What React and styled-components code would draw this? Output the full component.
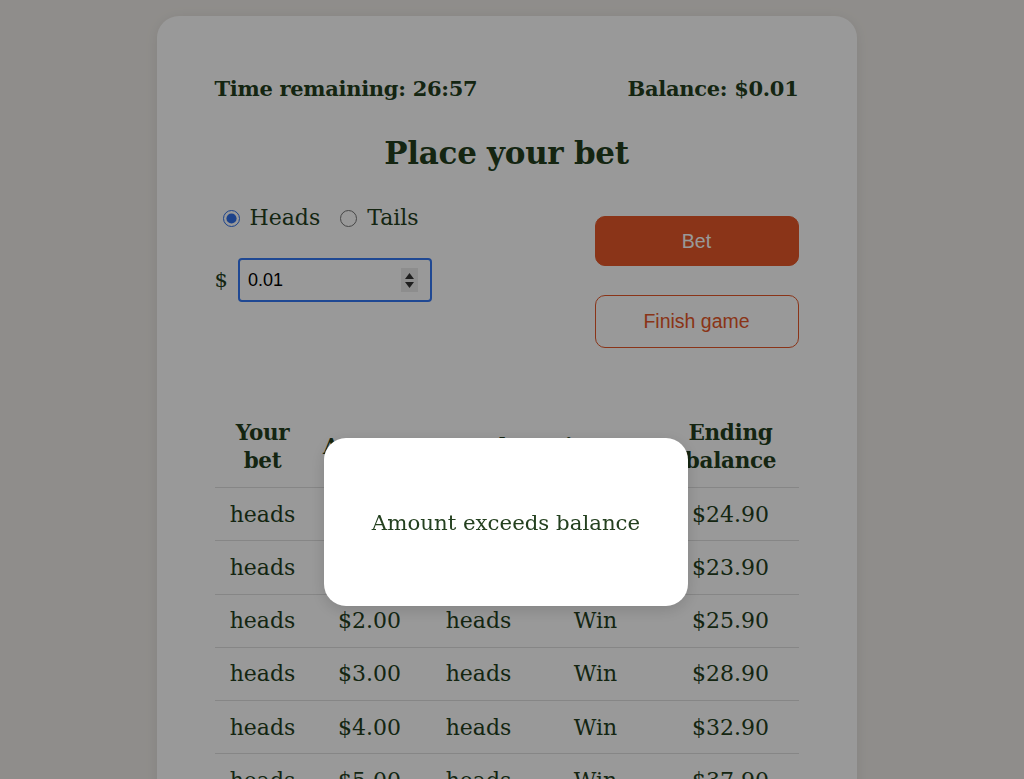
import React from "react";
import styled, { createGlobalStyle } from "styled-components";

const Global = createGlobalStyle`
  html, body { margin: 0; padding: 0; height: 100%; overflow: hidden; }
  body { background: #efece8; font-family: "DejaVu Serif", "Liberation Serif", serif; color: #233f1d; }
  * { box-sizing: border-box; }
`;

const Page = styled.div`
  display: flex;
  justify-content: center;
  padding: 16px 11px 0 0;
`;

const Card = styled.main`
  width: 700px;
  background: #ffffff;
  border-radius: 22px;
  box-shadow: 0 2px 14px rgba(0, 0, 0, 0.08);
  padding: 59px 58px 40px;
`;

const TopBar = styled.div`
  display: flex;
  justify-content: space-between;
  align-items: baseline;
  font-weight: 700;
  font-size: 21px;
  line-height: 28px;
  letter-spacing: -0.3px;
`;

const Title = styled.h1`
  margin: 30px 0 0;
  text-align: center;
  font-size: 31px;
  line-height: 40px;
  font-weight: 700;
  letter-spacing: -0.3px;
`;

const Controls = styled.section`
  display: flex;
  justify-content: space-between;
  align-items: flex-start;
  margin-top: 30px;
`;

const LeftCol = styled.div`
  display: flex;
  flex-direction: column;
  gap: 25px;
`;

const RadioRow = styled.div`
  display: flex;
  align-items: center;
  gap: 20px;
  padding-left: 8px;
`;

const RadioLabel = styled.label`
  display: flex;
  align-items: center;
  gap: 10px;
  font-size: 22px;
  line-height: 30px;
`;

const Radio = styled.input.attrs({ type: "radio" })`
  width: 17px;
  height: 17px;
  margin: 0;
  accent-color: #2f6fe8;
`;

const AmountRow = styled.div`
  display: flex;
  align-items: center;
  gap: 10px;
  font-size: 21px;
`;

const InputBox = styled.div`
  width: 194px;
  height: 44px;
  border: 2px solid #3478f6;
  border-radius: 4px;
  display: flex;
  align-items: center;
  padding: 0 12px 0 8px;
  background: #fff;
`;

const NumberInput = styled.input`
  flex: 1;
  min-width: 0;
  border: none;
  outline: none;
  background: transparent;
  font-family: "Liberation Sans", Arial, sans-serif;
  font-size: 18px;
  color: #000;
  padding: 0;
`;

const Spinner = styled.div`
  width: 17px;
  height: 24px;
  background: #ececec;
  display: flex;
  flex-direction: column;
  align-items: center;
  justify-content: center;
  gap: 3px;
`;

const RightCol = styled.div`
  display: flex;
  flex-direction: column;
  gap: 29px;
  width: 204px;
  padding-top: 13px;
`;

const Button = styled.button`
  height: ${(p) => (p.$outline ? "53px" : "50px")};
  border-radius: 10px;
  font-family: "Liberation Sans", Arial, sans-serif;
  font-size: 19.5px;
  cursor: pointer;
  background: ${(p) => (p.$outline ? "#ffffff" : "#e65728")};
  color: ${(p) => (p.$outline ? "#e65728" : "#ffffff")};
  border: ${(p) => (p.$outline ? "1.5px solid #e65728" : "1px solid #e65728")};
`;

const Table = styled.table`
  width: 100%;
  margin-top: 65px;
  border-collapse: collapse;
  table-layout: fixed;
`;

const Th = styled.th`
  font-weight: 700;
  font-size: 21.5px;
  line-height: 28px;
  padding: 6px 4px 12px;
  text-align: center;
  vertical-align: middle;
  border-bottom: 1px solid #dfdfdf;
  letter-spacing: -0.3px;
`;

const Td = styled.td`
  font-size: 22px;
  height: 53.25px;
  padding: 0 4px;
  text-align: center;
  border-bottom: 1px solid #dfdfdf;
`;

const Overlay = styled.div`
  position: fixed;
  inset: 0;
  background: rgba(0, 0, 0, 0.4);
`;

const Modal = styled.div`
  position: absolute;
  left: 324px;
  top: 438px;
  width: 364px;
  height: 168px;
  background: #ffffff;
  border-radius: 22px;
  box-shadow: 0 4px 16px rgba(0, 0, 0, 0.15);
  display: flex;
  align-items: center;
  justify-content: center;
  font-size: 21.3px;
  color: #24401f;
`;

const rows = [
  ["heads", "$1.00", "heads", "Win", "$24.90"],
  ["heads", "$1.00", "tails", "Lose", "$23.90"],
  ["heads", "$2.00", "heads", "Win", "$25.90"],
  ["heads", "$3.00", "heads", "Win", "$28.90"],
  ["heads", "$4.00", "heads", "Win", "$32.90"],
  ["heads", "$5.00", "heads", "Win", "$37.90"],
  ["heads", "$6.00", "heads", "Win", "$43.90"],
];

export default function App() {
  return (
    <>
      <Global />
      <Page>
        <Card>
          <TopBar>
            <span>Time remaining: 26:57</span>
            <span>Balance: $0.01</span>
          </TopBar>
          <Title>Place your bet</Title>
          <Controls>
            <LeftCol>
              <RadioRow>
                <RadioLabel>
                  <Radio name="side" defaultChecked />
                  Heads
                </RadioLabel>
                <RadioLabel>
                  <Radio name="side" />
                  Tails
                </RadioLabel>
              </RadioRow>
              <AmountRow>
                <span>$</span>
                <InputBox>
                  <NumberInput defaultValue="0.01" />
                  <Spinner>
                    <svg width="9" height="6" viewBox="0 0 9 6">
                      <path d="M4.5 0 L9 6 L0 6 Z" fill="#333" />
                    </svg>
                    <svg width="9" height="6" viewBox="0 0 9 6">
                      <path d="M0 0 L9 0 L4.5 6 Z" fill="#333" />
                    </svg>
                  </Spinner>
                </InputBox>
              </AmountRow>
            </LeftCol>
            <RightCol>
              <Button>Bet</Button>
              <Button $outline>Finish game</Button>
            </RightCol>
          </Controls>
          <Table>
            <colgroup>
              <col style={{ width: "96px" }} />
              <col style={{ width: "118px" }} />
              <col style={{ width: "100px" }} />
              <col style={{ width: "134px" }} />
              <col style={{ width: "136px" }} />
            </colgroup>
            <thead>
              <tr>
                <Th>Your bet</Th>
                <Th>Amount</Th>
                <Th>Result</Th>
                <Th>Win/Lose</Th>
                <Th>Ending balance</Th>
              </tr>
            </thead>
            <tbody>
              {rows.map((r, i) => (
                <tr key={i}>
                  {r.map((c, j) => (
                    <Td key={j}>{c}</Td>
                  ))}
                </tr>
              ))}
            </tbody>
          </Table>
        </Card>
      </Page>
      <Overlay>
        <Modal>Amount exceeds balance</Modal>
      </Overlay>
    </>
  );
}
